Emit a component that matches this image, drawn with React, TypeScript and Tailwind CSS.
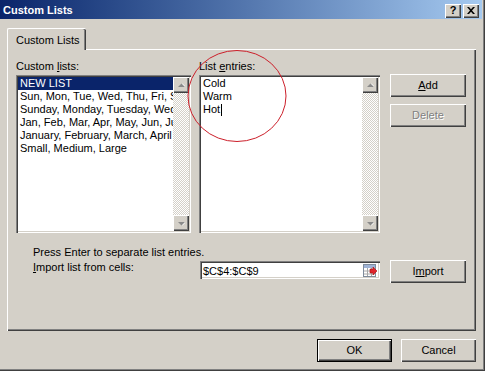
import React from "react";

const raised =
  "bg-[#d4d0c8] shadow-[inset_1px_1px_#ffffff,inset_-1px_-1px_#404040,inset_-2px_-2px_#808080]";
const sunken =
  "bg-white shadow-[inset_1px_1px_#808080,inset_2px_2px_#404040,inset_-1px_-1px_#ffffff,inset_-2px_-2px_#d4d0c8]";

function Arrow({ dir }: { dir: "up" | "down" }) {
  return (
    <div className={`w-[16px] h-[16px] flex items-center justify-center ${raised}`}>
      <svg width="7" height="5" viewBox="0 0 7 5" className="block">
        {dir === "up" ? (
          <>
            <path d="M1 4h7L4.5 0.5z" fill="#ffffff" />
            <path d="M0 4h7L3.5 0.5z" fill="#8a8a8a" />
          </>
        ) : (
          <>
            <path d="M1 1h7L4.5 4.5z" fill="#ffffff" />
            <path d="M0 1h7L3.5 4.5z" fill="#8a8a8a" />
          </>
        )}
      </svg>
    </div>
  );
}

function Scrollbar() {
  return (
    <div className="w-[16px] flex flex-col shrink-0">
      <Arrow dir="up" />
      <div className="flex-1 bg-[image:repeating-conic-gradient(#d4d0c8_0_25%,#ffffff_0_50%)] bg-[length:2px_2px]" />
      <Arrow dir="down" />
    </div>
  );
}

function Row({ children, selected }: { children: React.ReactNode; selected?: boolean }) {
  return (
    <div
      className={`h-[13px] leading-[13px] pl-[2px] whitespace-nowrap overflow-hidden ${
        selected ? "bg-[#0a246a] text-white" : ""
      }`}
    >
      {children}
    </div>
  );
}

function Button({
  children,
  disabled,
  isDefault,
  className = "",
}: {
  children: React.ReactNode;
  disabled?: boolean;
  isDefault?: boolean;
  className?: string;
}) {
  return (
    <div className={`${isDefault ? "border border-black" : ""} ${className}`}>
      <div
        className={`w-full h-full flex items-center justify-center ${raised} ${
          disabled ? "text-[#808080] [text-shadow:1px_1px_0_#ffffff]" : ""
        }`}
      >
        {children}
      </div>
    </div>
  );
}

function CollapseIcon() {
  return (
    <svg width="16" height="15" viewBox="0 0 16 15" className="block">
      <rect x="1.5" y="1.5" width="12" height="12" fill="#ffffff" stroke="#7f8c9c" />
      <rect x="2" y="2" width="11" height="3" fill="#9fb3d6" />
      <path d="M2 8h11M2 11h11M5.5 5v8M9.5 5v8" stroke="#a8a8a8" strokeWidth="1" />
      <path d="M8 6h3V4l4 4-4 4v-2H8z" fill="#e0242c" stroke="#a01010" strokeWidth="0.6" />
    </svg>
  );
}

export default function App() {
  return (
    <div className="relative w-[485px] h-[371px] bg-[#d4d0c8] flex flex-col overflow-hidden shadow-[inset_-1px_-1px_#404040,inset_-2px_-2px_#808080] font-['Liberation_Sans',Arial,sans-serif] text-[11px] text-black">
      {/* Title bar */}
      <div className="w-[482px] h-[19px] shrink-0 bg-linear-to-r from-[#0a246a] to-[#a6caf0] flex items-center justify-between pl-[3px] pr-[3px]">
        <span className="text-white font-bold text-[11px] leading-[13px] mt-[2px]">Custom Lists</span>
        <div className="flex gap-[2px] mt-[2px]">
          <div className={`w-[16px] h-[14px] flex items-center justify-center font-bold text-[11px] leading-[11px] ${raised}`}>
            ?
          </div>
          <div className={`w-[16px] h-[14px] flex items-center justify-center ${raised}`}>
            <svg width="8" height="7" viewBox="0 0 8 7" className="block">
              <path d="M0 0h2l2 2.3L6 0h2L5 3.5 8 7H6L4 4.7 2 7H0l3-3.5z" fill="#000" />
            </svg>
          </div>
        </div>
      </div>

      {/* Tab */}
      <div className="ml-[7px] mt-[9px] w-[79px] h-[22px] -mb-[1px] relative z-10 bg-[#d4d0c8] border-l border-t border-white rounded-tl-[2px] rounded-tr-[2px] shadow-[inset_-1px_0_#404040,inset_-2px_0_#808080] pl-[8px] pt-[5px] leading-[13px] shrink-0">
        Custom Lists
      </div>

      {/* Panel */}
      <div className="ml-[7px] w-[469px] h-[282px] shrink-0 border-t border-l border-white shadow-[inset_-1px_-1px_#404040,inset_-2px_-2px_#808080] pl-[8px] pt-[10px] flex flex-col">
        <div className="flex">
          <div className="w-[175px] flex flex-col">
            <div className="h-[13px] leading-[13px] mb-[2px]">
              Custom <u>l</u>ists:
            </div>
            <div className={`h-[158px] p-[2px] flex ${sunken}`}>
              <div className="flex-1 min-w-0 flex flex-col">
                <Row selected>NEW LIST</Row>
                <Row>Sun, Mon, Tue, Wed, Thu, Fri, Sat</Row>
                <Row>Sunday, Monday, Tuesday, Wednesday</Row>
                <Row>Jan, Feb, Mar, Apr, May, Jun, Jul</Row>
                <Row>January, February, March, April</Row>
                <Row>Small, Medium, Large</Row>
              </div>
              <Scrollbar />
            </div>
          </div>

          <div className="w-[181px] ml-[8px] flex flex-col">
            <div className="h-[13px] leading-[13px] mb-[2px]">
              List <u>e</u>ntries:
            </div>
            <div className={`h-[158px] p-[2px] flex ${sunken}`}>
              <div className="flex-1 min-w-0 flex flex-col">
                <Row>Cold</Row>
                <Row>Warm</Row>
                <Row>
                  <span className="inline-flex items-center">
                    Hot<span className="inline-block w-px h-[12px] bg-black ml-px" />
                  </span>
                </Row>
              </div>
              <Scrollbar />
            </div>
          </div>

          <div className="w-[76px] ml-[10px] pt-[14px] flex flex-col">
            <Button className="h-[23px]">
              <span>
                <u>A</u>dd
              </span>
            </Button>
            <Button className="h-[23px] mt-[7px]" disabled>
              <span>Delete</span>
            </Button>
          </div>
        </div>

        <div className="pl-[17px] mt-[13px] h-[13px] leading-[13px]">
          Press Enter to separate list entries.
        </div>

        <div className="flex items-start mt-[1px]">
          <div className="w-[184px] pl-[17px] mt-[1px] leading-[13px]">
            <u>I</u>mport list from cells:
          </div>
          <div className={`w-[180px] h-[18px] mt-[1px] p-[2px] flex items-center ${sunken}`}>
            <span className="flex-1 pl-[1px] leading-[14px] mt-[1px]">$C$4:$C$9</span>
            <CollapseIcon />
          </div>
          <Button className="w-[76px] h-[23px] ml-[10px]">
            <span>
              I<u>m</u>port
            </span>
          </Button>
        </div>
      </div>

      {/* Bottom buttons */}
      <div className="flex justify-end gap-[9px] pr-[9px] mt-[8px]">
        <Button isDefault className="w-[75px] h-[23px]">
          OK
        </Button>
        <Button className="w-[75px] h-[23px]">Cancel</Button>
      </div>

      {/* Red annotation circle */}
      <svg
        className="absolute left-[187px] top-[49px] pointer-events-none"
        width="100"
        height="95"
        viewBox="0 0 100 95"
      >
        <ellipse cx="50" cy="47" rx="49" ry="45.5" fill="none" stroke="#cc1f2a" strokeWidth="1" />
      </svg>
    </div>
  );
}
